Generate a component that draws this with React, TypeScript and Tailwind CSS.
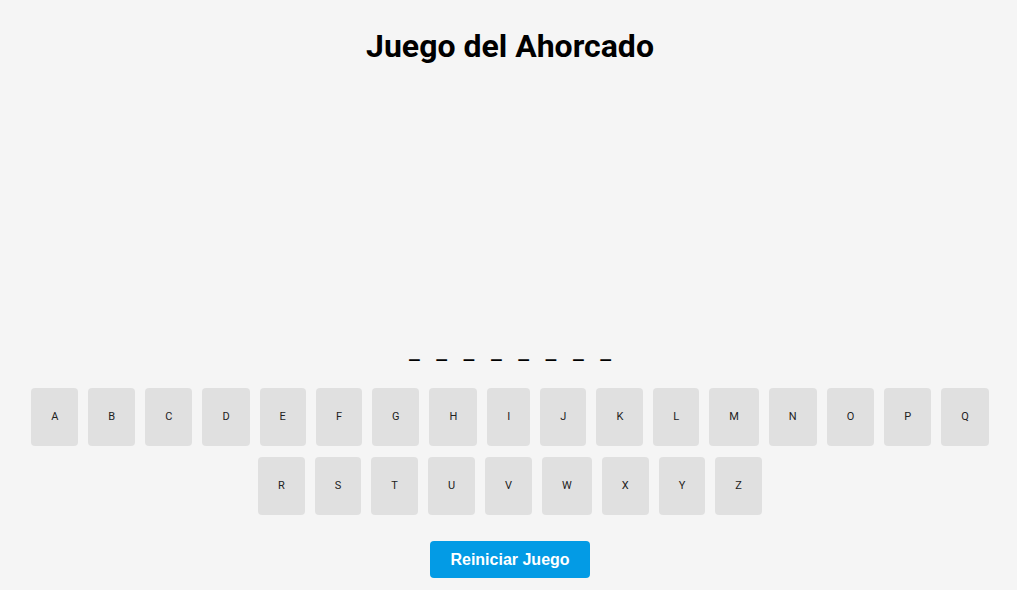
import React from "react";

const LETTERS = "ABCDEFGHIJKLMNOPQRSTUVWXYZ".split("");

export default function App() {
  const [guessed, setGuessed] = React.useState<string[]>([]);
  const word = "AHORCADO";

  return (
    <div className="min-h-[590px] bg-[#f5f5f5] pl-[3px] font-['Roboto',sans-serif] text-black">
      <div className="flex flex-col items-center">
        {/* Title */}
        <h1 className="pt-[28px] text-[32px] font-bold leading-[37px]">Juego del Ahorcado</h1>

        {/* Hangman drawing area (empty at start) */}
        <div className="h-[264px] w-[250px]" />

        {/* Word */}
        <div className="mt-[8px] flex gap-[16.5px] text-[24px] leading-[28px]">
          {word.split("").map((ch, i) => (
            <span key={i}>{guessed.includes(ch) ? ch : "_"}</span>
          ))}
        </div>

        {/* Keyboard */}
        <div className="mt-[23px] flex max-w-[990px] flex-wrap justify-center gap-x-[10px] gap-y-[11px]">
          {LETTERS.map((l) => (
            <button
              key={l}
              onClick={() => setGuessed([...guessed, l])}
              className="rounded-[4px] bg-[#e0e0e0] px-[20px] py-[20px] text-[11px] leading-[18px] text-[#222]"
            >
              {l}
            </button>
          ))}
        </div>

        <button
          onClick={() => setGuessed([])}
          className="mt-[26px] rounded-[4px] bg-[#039be5] px-[20px] py-[10px] font-['Liberation_Sans',sans-serif] text-[16px] font-bold leading-[17px] text-white"
        >
          Reiniciar Juego
        </button>
      </div>
    </div>
  );
}
